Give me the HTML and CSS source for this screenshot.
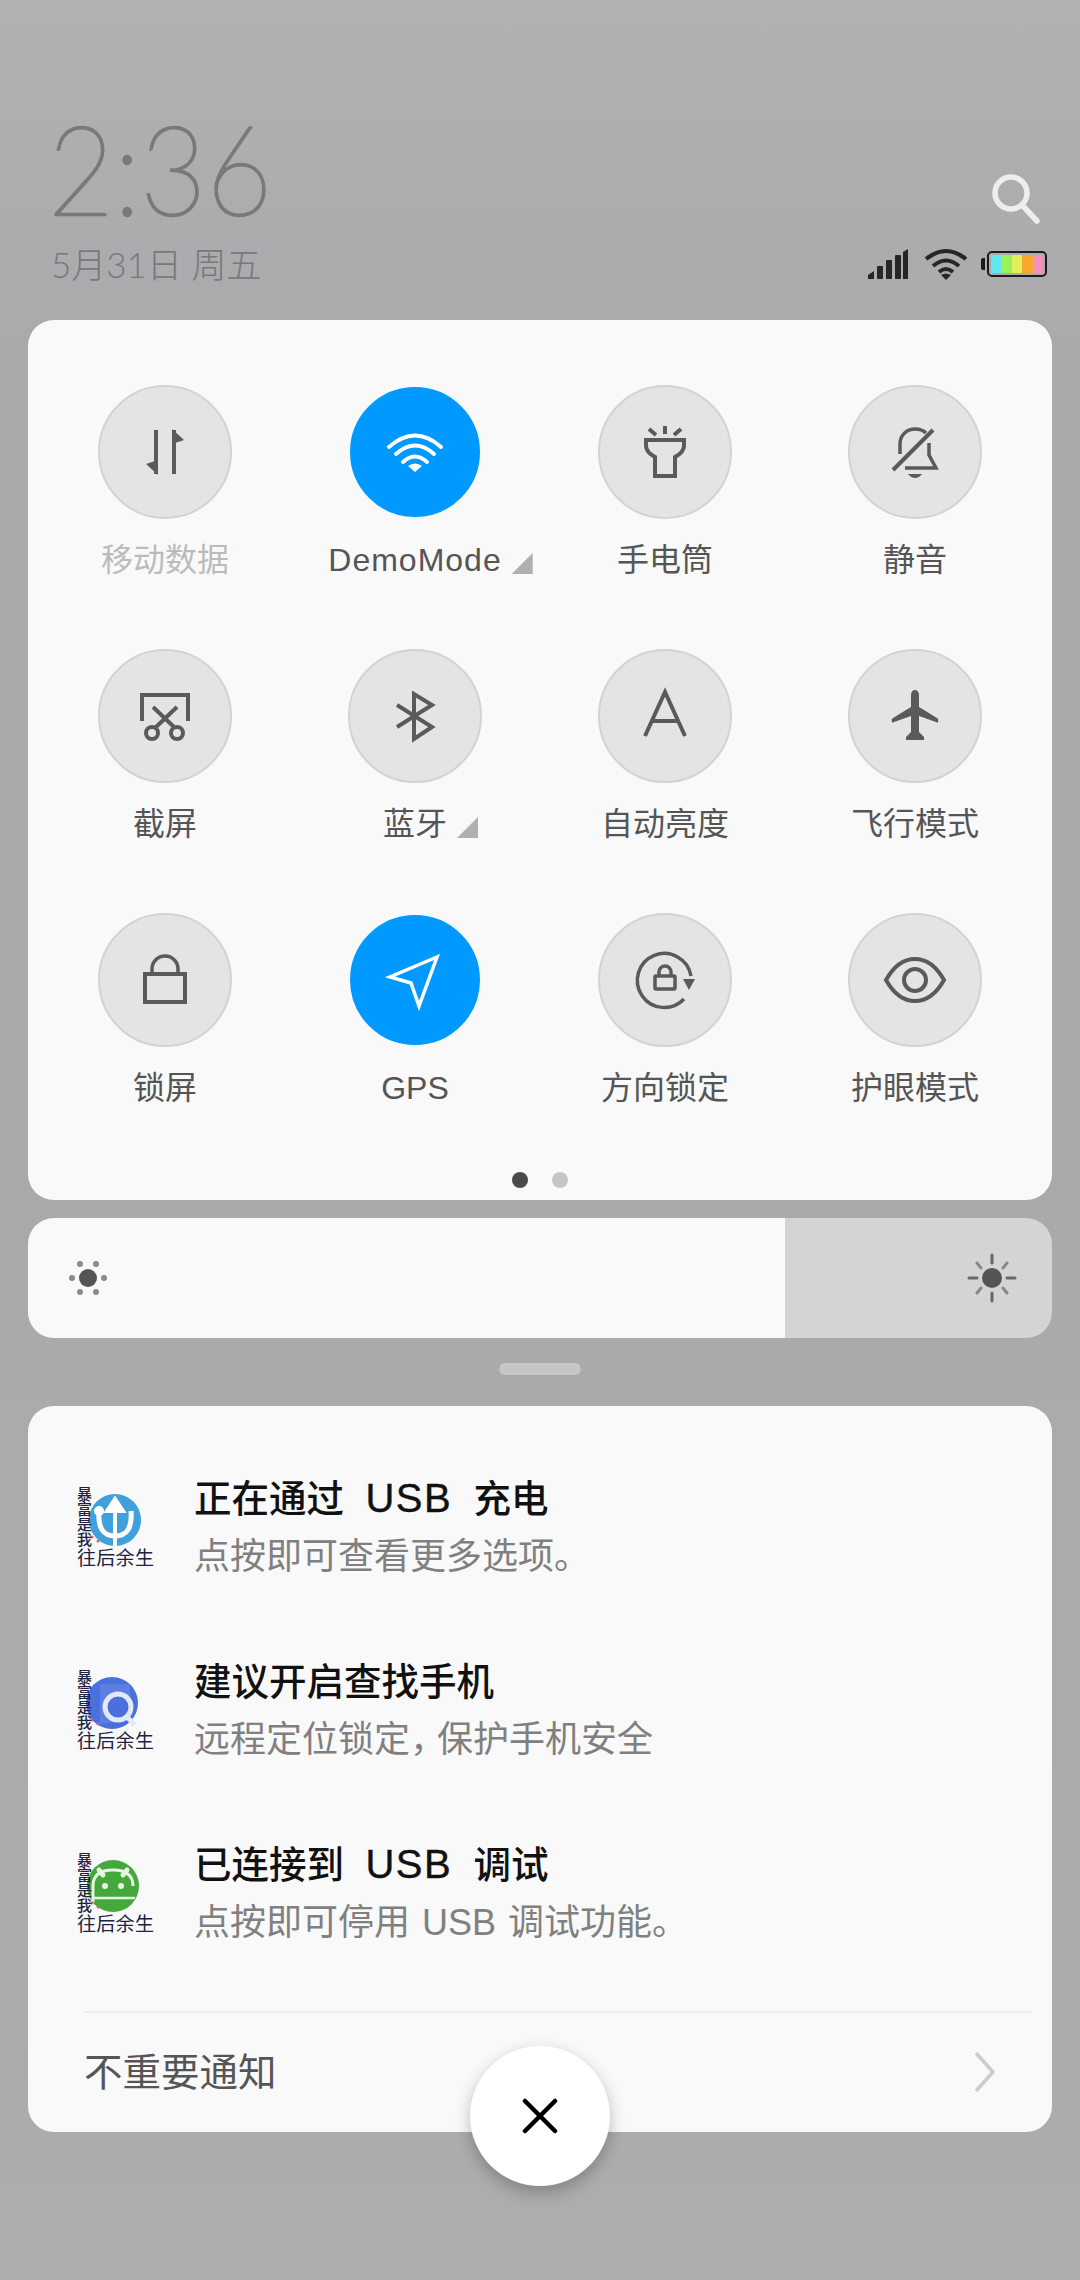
FILE: index.html
```html
<!DOCTYPE html>
<html lang="zh-CN">
<head>
    <meta charset="UTF-8">
    <title>Control Center</title>
    <link rel="stylesheet" href="styles.css">
</head>
<body>
<div class="screen">
    <header class="header">
        <div class="clock">
            <div class="time">2:36</div>
            <div class="date">5月31日 周五</div>
        </div>
        <div class="header-right">
            <svg class="search" width="60" height="60" viewBox="0 0 60 60"><circle cx="21" cy="22" r="16" fill="none" stroke="#eeeeee" stroke-width="5.5"/><path d="M33 35 L47 50" stroke="#eeeeee" stroke-width="5.5" stroke-linecap="round"/></svg>
            <div class="status">
                <svg width="42" height="30" viewBox="0 0 42 30" fill="#262626"><path d="M1 30 V26 L7 22 V30 Z"/><rect x="10" y="17" width="6" height="13" rx="1"/><rect x="19" y="11" width="6" height="19" rx="1"/><rect x="28" y="6" width="6" height="24" rx="1"/><path d="M36 3 L41 0 V30 H36 Z"/></svg>
                <svg width="44" height="32" viewBox="0 0 44 32" fill="none" stroke="#262626" stroke-width="4"><path d="M2 11 Q22 -5 42 11"/><path d="M9 18 Q22 7 35 18"/><path d="M15 24 Q22 18 29 24"/><path d="M22 32 L17 27 Q22 24 27 27 Z" fill="#262626" stroke="none"/></svg>
                <div class="battery">
                    <span class="cell cyan"></span><span class="cell green"></span><span class="cell yellow"></span><span class="cell orange"></span><span class="cell pink"></span>
                </div>
            </div>
        </div>
    </header>

    <section class="panel toggles">
        <div class="grid">
            <div class="toggle">
                <div class="circle"><svg width="80" height="80" viewBox="-40 -40 80 80"><path d="M-9 -22 V22" class="ln"/><path d="M-7 23 L-19 12 L-7 8 Z" class="fl"/><path d="M9 22 V-22" class="ln"/><path d="M7 -23 L19 -12 L7 -8 Z" class="fl"/></svg></div>
                <div class="label off">移动数据</div>
            </div>
            <div class="toggle">
                <div class="circle on"><svg width="80" height="80" viewBox="-40 -40 80 80"><path d="M-26 -5 Q0 -28 26 -5" class="wh"/><path d="M-19 2 Q0 -15 19 2" class="wh"/><path d="M-12 10 Q0 -1 12 10" class="wh"/><path d="M0 20 L-7 14 Q0 9 7 14 Z" fill="#fff"/></svg></div>
                <div class="label"><span class="more wide">DemoMode</span></div>
            </div>
            <div class="toggle">
                <div class="circle"><svg width="80" height="80" viewBox="-40 -40 80 80"><path d="M0 -26 V-18 M-16 -23 L-9 -17 M16 -23 L9 -17" class="ln"/><path d="M-19 -12 H19 V-6 Q19 0 10 5 V24 H-10 V5 Q-19 0 -19 -6 Z" class="ln"/></svg></div>
                <div class="label">手电筒</div>
            </div>
            <div class="toggle">
                <div class="circle"><svg width="80" height="80" viewBox="-40 -40 80 80"><path d="M-15 2 V-8 C-15 -18 -7 -23 0 -23 C4 -23 8 -22 11 -19" class="ln thin"/><path d="M14 -9 V3 L21 16 H-10" class="ln thin"/><path d="M18 -22 L-22 18" class="ln"/><path d="M-7 22 H7 Q4 26 0 26 Q-4 26 -7 22 Z" class="fl"/></svg></div>
                <div class="label">静音</div>
            </div>

            <div class="toggle">
                <div class="circle"><svg width="80" height="80" viewBox="-40 -40 80 80"><path d="M-23 5 V-21 H23 V5" class="ln"/><path d="M-12 -9 L9 11 M12 -9 L-9 11" class="ln"/><circle cx="-13" cy="17" r="6" class="ln"/><circle cx="12" cy="17" r="6" class="ln"/></svg></div>
                <div class="label">截屏</div>
            </div>
            <div class="toggle">
                <div class="circle"><svg width="80" height="80" viewBox="-40 -40 80 80"><path d="M-18 -11 L17 11 L-1 23 V-22 L17 -11 L-18 11" class="ln"/></svg></div>
                <div class="label"><span class="more">蓝牙</span></div>
            </div>
            <div class="toggle">
                <div class="circle"><svg width="80" height="80" viewBox="-40 -40 80 80"><path d="M-20 20 L0 -24 L20 20 M-13 5 H13" class="ln"/></svg></div>
                <div class="label">自动亮度</div>
            </div>
            <div class="toggle">
                <div class="circle"><svg width="80" height="80" viewBox="-40 -40 80 80"><path d="M0 -26 C2.5 -26 4 -24 4 -21 V-9 L22 2 Q24 3 23 6 Q23 7 21 6 L4 0 V16 L9 21 V24 H-9 V21 L-4 16 V0 L-21 6 Q-23 7 -23 6 Q-24 3 -22 2 L-4 -9 V-21 C-4 -24 -2.5 -26 0 -26 Z" class="fl"/></svg></div>
                <div class="label">飞行模式</div>
            </div>

            <div class="toggle">
                <div class="circle"><svg width="80" height="80" viewBox="-40 -40 80 80"><rect x="-20" y="-6" width="40" height="28" class="ln"/><path d="M-13 -7 V-11 A13 13 0 0 1 13 -11 V-7" class="ln thin"/></svg></div>
                <div class="label">锁屏</div>
            </div>
            <div class="toggle">
                <div class="circle on"><svg width="80" height="80" viewBox="-40 -40 80 80"><path d="M22 -23 L-25 -3 L-4 3 L4 26 Z" class="wh nav"/></svg></div>
                <div class="label">GPS</div>
            </div>
            <div class="toggle">
                <div class="circle"><svg width="80" height="80" viewBox="-40 -40 80 80"><path d="M26 -4 A27 27 0 1 0 19 19" class="ln thin"/><path d="M18 -1 H30 L24 10 Z" class="fl"/><rect x="-10" y="-4" width="20" height="13" rx="1" class="ln thin"/><path d="M-6 -5 V-8 A6 6 0 0 1 6 -8 V-5" class="ln thin"/></svg></div>
                <div class="label">方向锁定</div>
            </div>
            <div class="toggle">
                <div class="circle"><svg width="80" height="80" viewBox="-40 -40 80 80"><path d="M-29 0 C-20 -16 -10 -21 0 -21 C10 -21 20 -16 29 0 C20 16 10 21 0 21 C-10 21 -20 16 -29 0 Z" class="ln"/><circle r="11" class="ln"/></svg></div>
                <div class="label">护眼模式</div>
            </div>
        </div>
        <div class="dots"><span class="dot active"></span><span class="dot"></span></div>
    </section>

    <section class="brightness">
        <div class="fill">
            <svg width="44" height="44" viewBox="-22 -22 44 44"><circle r="9" fill="#555"/><g fill="#8a8a8a"><circle cx="-8" cy="-14" r="3"/><circle cx="8" cy="-14" r="3"/><circle cx="-16" cy="0" r="3"/><circle cx="16" cy="0" r="3"/><circle cx="-8" cy="14" r="3"/><circle cx="8" cy="14" r="3"/></g></svg>
        </div>
        <div class="rest">
            <svg width="52" height="52" viewBox="-26 -26 52 52"><circle r="10" fill="#555"/><path d="M0 -23 V-15 M0 23 V15 M-23 0 H-15 M23 0 H15" stroke="#666" stroke-width="3" stroke-linecap="round"/><path d="M-15 -15 L-11 -10 M15 -15 L11 -10 M-15 15 L-11 10 M15 15 L11 10" stroke="#888" stroke-width="3" stroke-linecap="round"/></svg>
        </div>
    </section>

    <div class="handle"></div>

    <section class="panel notes">
        <div class="note">
            <div class="app">
                <svg class="badge" width="60" height="60" viewBox="0 0 60 60"><circle cx="30" cy="30" r="26" fill="#3fa0dc"/><path d="M30 56 V12 M22 21 L30 9 L38 21 Z" stroke="#fff" stroke-width="4" fill="#fff"/><path d="M14 21 Q12 46 30 46 Q48 46 46 21" stroke="#fff" stroke-width="5" fill="none"/><circle cx="14" cy="21" r="5" fill="#fff"/><circle cx="7" cy="47" r="1.5" fill="#e0606a"/><circle cx="13" cy="51" r="1.5" fill="#e0606a"/></svg>
                <span class="app-side">暴富是我</span>
                <span class="app-name">往后余生</span>
            </div>
            <div class="note-text">
                <div class="note-title">正在通过 <span class="latin">USB</span> 充电</div>
                <div class="note-sub">点按即可查看更多选项。</div>
            </div>
        </div>
        <div class="note">
            <div class="app">
                <svg class="badge" width="60" height="60" viewBox="0 0 60 60"><circle cx="27" cy="30" r="26" fill="#4a70dc"/><path d="M15 11 H45 V46 L15 51 Z" fill="#5a7ee2"/><circle cx="33" cy="34" r="13" fill="#4a70dc" stroke="#e4e9fa" stroke-width="5"/><path d="M42 44 L50 52" stroke="#e4e9fa" stroke-width="5"/><circle cx="7" cy="47" r="1.5" fill="#e0606a"/><circle cx="13" cy="51" r="1.5" fill="#e0606a"/></svg>
                <span class="app-side">暴富是我</span>
                <span class="app-name">往后余生</span>
            </div>
            <div class="note-text">
                <div class="note-title">建议开启查找手机</div>
                <div class="note-sub">远程定位锁定<span class="comma">，</span>保护手机安全</div>
            </div>
        </div>
        <div class="note">
            <div class="app">
                <svg class="badge" width="60" height="60" viewBox="0 0 60 60"><circle cx="28" cy="30" r="26" fill="#45a83a"/><path d="M8 46 V30 Q8 14 28 14 Q48 14 48 30" fill="none" stroke="#e8f4e4" stroke-width="3"/><path d="M14 14 L18 19 M42 14 L38 19" stroke="#e8f4e4" stroke-width="5" stroke-linecap="round"/><circle cx="20" cy="30" r="3" fill="#e8f4e4"/><circle cx="36" cy="30" r="3" fill="#e8f4e4"/><path d="M8 42 H50" stroke="#e8f4e4" stroke-width="2.5"/><circle cx="7" cy="47" r="1.5" fill="#e0606a"/><circle cx="13" cy="51" r="1.5" fill="#e0606a"/></svg>
                <span class="app-side">暴富是我</span>
                <span class="app-name">往后余生</span>
            </div>
            <div class="note-text">
                <div class="note-title">已连接到 <span class="latin">USB</span> 调试</div>
                <div class="note-sub">点按即可停用 USB 调试功能。</div>
            </div>
        </div>
        <div class="divider"></div>
        <div class="footer">
            <span class="footer-text">不重要通知</span>
            <svg width="22" height="42" viewBox="0 0 22 42" fill="none" stroke="#cccccc" stroke-width="3.5"><path d="M2 2 L19 21 L2 40"/></svg>
        </div>
    </section>

    <div class="close"><svg width="36" height="36" viewBox="0 0 36 36" fill="none" stroke="#000" stroke-width="4.5" stroke-linecap="round"><path d="M3 3 L33 33 M33 3 L3 33"/></svg></div>
</div>
</body>
</html>
```
FILE: styles.css
```css
* {
    box-sizing: border-box;
}

body {
    margin: 0;
    font-family: "Liberation Sans", "Noto Sans CJK SC", sans-serif;
}

.screen {
    position: relative;
    width: 1080px;
    height: 2280px;
    padding: 0 28px;
    overflow: hidden;
    background: linear-gradient(to bottom, #b1b1b3 0%, #aaa9ac 15%, #a9a8ab 45%, #adadaf 100%);
}

.header {
    display: flex;
    justify-content: space-between;
    height: 320px;
    padding: 102px 5px 0 20px;
}

.time {
    font-family: Lato, sans-serif;
    font-weight: 100;
    font-size: 125px;
    line-height: 130px;
    color: #77797b;
    -webkit-text-stroke: 2.5px #77797b;
    transform: scaleX(0.91);
    transform-origin: left center;
}

.date {
    margin-top: 9px;
    padding-left: 3px;
    font-family: Lato, "Noto Sans CJK SC", sans-serif;
    font-size: 35px;
    font-weight: 300;
    line-height: 46px;
    color: #77797b;
}

.header-right {
    display: flex;
    flex-direction: column;
    align-items: flex-end;
}

.search {
    margin-top: 69px;
    margin-right: -3px;
}

.status {
    display: flex;
    align-items: center;
    gap: 15px;
    margin-top: 17px;
}

.battery {
    position: relative;
    display: flex;
    width: 60px;
    height: 26px;
    margin-left: 4px;
    padding: 2px;
    border: 2px solid #1c1c1c;
    border-radius: 5px;
}

.battery::before {
    content: "";
    position: absolute;
    left: -8px;
    top: 5px;
    width: 4px;
    height: 12px;
    background: #1c1c1c;
    border-radius: 2px 0 0 2px;
}

.cell {
    flex: 1;
}

.cyan { background: #5ee8f2; }
.green { background: #9cf05c; }
.yellow { background: #e4f05a; }
.orange { background: #f8a830; }
.pink { background: #f492bc; }

.panel {
    background: #f9f9f9;
    border-radius: 26px;
}

.toggles {
    height: 880px;
    padding: 65px 12px 0;
}

.grid {
    display: grid;
    grid-template-columns: repeat(4, 250px);
    row-gap: 69px;
}

.toggle {
    display: flex;
    flex-direction: column;
    align-items: center;
}

.circle {
    display: flex;
    align-items: center;
    justify-content: center;
    width: 134px;
    height: 134px;
    background: #e4e4e4;
    border: 2px solid #d3d3d3;
    border-radius: 50%;
}

.circle.on {
    background: #0099ff;
    border: 2px solid #f9f9f9;
}

.ln {
    fill: none;
    stroke: #5a5a5a;
    stroke-width: 4;
}

.thin {
    stroke-width: 3.5;
}

.fl {
    fill: #5a5a5a;
}

.wh {
    fill: none;
    stroke: #fff;
    stroke-width: 4;
    stroke-linecap: round;
}

.nav {
    stroke-width: 3.5;
    stroke-linejoin: miter;
}

.label {
    margin-top: 21px;
    font-size: 32px;
    line-height: 40px;
    color: #555;
}

.label.off {
    color: #bbb;
}

.more {
    position: relative;
}

.wide {
    letter-spacing: 1px;
}

.more::after {
    content: "";
    position: absolute;
    left: calc(100% + 10px);
    top: 11px;
    width: 21px;
    height: 21px;
    background: #b0b0b0;
    clip-path: polygon(100% 0, 100% 100%, 0 100%);
}

.dots {
    display: flex;
    justify-content: center;
    gap: 24px;
    margin-top: 64px;
}

.dot {
    width: 16px;
    height: 16px;
    border-radius: 50%;
    background: #c6c6c6;
}

.dot.active {
    background: #4a4a4a;
}

.brightness {
    display: flex;
    height: 120px;
    margin-top: 18px;
    border-radius: 26px;
    overflow: hidden;
}

.fill {
    display: flex;
    align-items: center;
    width: 757px;
    padding-left: 38px;
    background: #f9f9f9;
}

.rest {
    display: flex;
    flex: 1;
    align-items: center;
    justify-content: flex-end;
    padding-right: 34px;
    background: #d4d4d5;
}

.handle {
    width: 82px;
    height: 12px;
    margin: 25px auto 31px;
    background: #c6c6c8;
    border-radius: 6px;
}

.notes {
    height: 726px;
    padding-top: 28px;
}

.note {
    display: flex;
    align-items: center;
    height: 183px;
    padding-left: 48px;
    gap: 38px;
}

.app {
    position: relative;
    flex: none;
    width: 80px;
    height: 82px;
    margin-top: 4px;
}

.badge {
    position: absolute;
    left: 9px;
    top: 3px;
}

.app-side {
    position: absolute;
    left: 0;
    top: 0;
    writing-mode: vertical-rl;
    font-size: 15px;
    line-height: 15px;
    font-weight: 500;
    color: #1e2240;
}

.app-name {
    position: absolute;
    left: 1px;
    bottom: 0;
    font-size: 19px;
    line-height: 20px;
    letter-spacing: 0.3px;
    color: #1e2240;
}

.note-text {
    padding-top: 3px;
}

.note-title {
    font-size: 37.5px;
    line-height: 50px;
    font-weight: 500;
    word-spacing: 11px;
    color: #111;
}

.latin {
    font-size: 40px;
    font-weight: 400;
    letter-spacing: 1.5px;
    -webkit-text-stroke: 0.4px #111;
}

.note-sub {
    margin-top: 9px;
    font-size: 36px;
    line-height: 48px;
    word-spacing: 2px;
    color: #808080;
}

.comma {
    letter-spacing: -9px;
}

.divider {
    height: 2px;
    margin: 28px 21px 0 56px;
    background: #ececec;
}

.footer {
    display: flex;
    align-items: center;
    justify-content: space-between;
    height: 120px;
    padding: 0 56px 3px 56px;
}

.footer-text {
    margin-bottom: 5px;
    font-size: 38.5px;
    color: #555;
}

.close {
    position: absolute;
    left: 470px;
    top: 2046px;
    display: flex;
    align-items: center;
    justify-content: center;
    width: 140px;
    height: 140px;
    background: #fff;
    border-radius: 50%;
    box-shadow: 0 6px 16px rgba(0, 0, 0, 0.25);
}
```
